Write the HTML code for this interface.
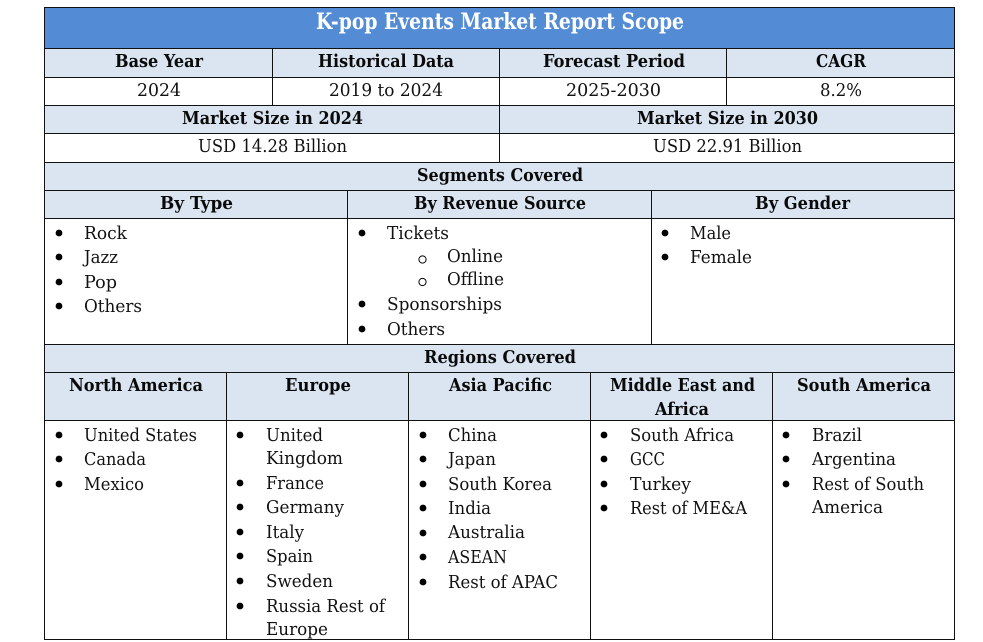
<!DOCTYPE html>
<html lang="en"><head><meta charset="utf-8"><title>K-pop Events Market Report Scope</title>
<style>
html,body{margin:0;padding:0;background:#fff;width:983px;height:642px;overflow:hidden}
svg{display:block}
text{font-family:"DejaVu Serif","Liberation Serif",serif;font-size:18px;fill:#111}
text.b{font-weight:bold;font-size:18px;fill:#0a0a0a}
text.t{font-weight:bold;font-size:22px;fill:#fff}
line{stroke:#111;stroke-width:1;shape-rendering:crispEdges}
rect{shape-rendering:crispEdges}
</style></head><body>
<svg width="983" height="642" viewBox="0 0 983 642" xmlns="http://www.w3.org/2000/svg">
<rect x="44" y="8" width="910" height="40" fill="#538cd5"/>
<rect x="44" y="48" width="910" height="29" fill="#dbe5f1"/>
<rect x="44" y="105" width="910" height="28" fill="#dbe5f1"/>
<rect x="44" y="162" width="910" height="56" fill="#dbe5f1"/>
<rect x="44" y="344" width="910" height="76" fill="#dbe5f1"/>

<g>
<line x1="44" y1="7.5" x2="955" y2="7.5"/><line x1="44" y1="48.5" x2="955" y2="48.5"/>
<line x1="44" y1="77.5" x2="955" y2="77.5"/><line x1="44" y1="105.5" x2="955" y2="105.5"/>
<line x1="44" y1="133.5" x2="955" y2="133.5"/><line x1="44" y1="162.5" x2="955" y2="162.5"/>
<line x1="44" y1="190.5" x2="955" y2="190.5"/><line x1="44" y1="218.5" x2="955" y2="218.5"/>
<line x1="44" y1="344.5" x2="955" y2="344.5"/><line x1="44" y1="372.5" x2="955" y2="372.5"/>
<line x1="44" y1="420.5" x2="955" y2="420.5"/><line x1="44" y1="639.5" x2="955" y2="639.5"/>
<line x1="44.5" y1="7" x2="44.5" y2="640"/><line x1="954.5" y1="7" x2="954.5" y2="640"/>
<line x1="272.5" y1="48" x2="272.5" y2="105"/><line x1="499.5" y1="48" x2="499.5" y2="162"/><line x1="726.5" y1="48" x2="726.5" y2="105"/>
<line x1="347.5" y1="190" x2="347.5" y2="344"/><line x1="651.5" y1="190" x2="651.5" y2="344"/>
<line x1="226.5" y1="372" x2="226.5" y2="640"/><line x1="408.5" y1="372" x2="408.5" y2="640"/><line x1="590.5" y1="372" x2="590.5" y2="640"/><line x1="772.5" y1="372" x2="772.5" y2="640"/>
</g>

<g transform="translate(0,-1)">
<text class="t" x="316" y="30" textLength="368" lengthAdjust="spacingAndGlyphs">K-pop Events Market Report Scope</text>

<text class="b" x="115" y="68" textLength="88" lengthAdjust="spacingAndGlyphs">Base Year</text>
<text class="b" x="318" y="68" textLength="136" lengthAdjust="spacingAndGlyphs">Historical Data</text>
<text class="b" x="543" y="68" textLength="142" lengthAdjust="spacingAndGlyphs">Forecast Period</text>
<text class="b" x="816" y="68" textLength="50" lengthAdjust="spacingAndGlyphs">CAGR</text>
<text class="b" x="182" y="125" textLength="181" lengthAdjust="spacingAndGlyphs">Market Size in 2024</text>
<text class="b" x="637" y="125" textLength="181" lengthAdjust="spacingAndGlyphs">Market Size in 2030</text>
<text class="b" x="417" y="182" textLength="166" lengthAdjust="spacingAndGlyphs">Segments Covered</text>
<text class="b" x="160" y="210" textLength="73" lengthAdjust="spacingAndGlyphs">By Type</text>
<text class="b" x="414" y="210" textLength="172" lengthAdjust="spacingAndGlyphs">By Revenue Source</text>
<text class="b" x="755" y="210" textLength="95" lengthAdjust="spacingAndGlyphs">By Gender</text>
<text class="b" x="424" y="364" textLength="152" lengthAdjust="spacingAndGlyphs">Regions Covered</text>
<text class="b" x="69" y="392" textLength="134" lengthAdjust="spacingAndGlyphs">North America</text>
<text class="b" x="285" y="392" textLength="66" lengthAdjust="spacingAndGlyphs">Europe</text>
<text class="b" x="449" y="392" textLength="103" lengthAdjust="spacingAndGlyphs">Asia Pacific</text>
<text class="b" x="610" y="392" textLength="145" lengthAdjust="spacingAndGlyphs">Middle East and</text>
<text class="b" x="655" y="416" textLength="54" lengthAdjust="spacingAndGlyphs">Africa</text>
<text class="b" x="797" y="392" textLength="134" lengthAdjust="spacingAndGlyphs">South America</text>

<text x="137" y="97" textLength="44" lengthAdjust="spacingAndGlyphs">2024</text>
<text x="329" y="97" textLength="114" lengthAdjust="spacingAndGlyphs">2019 to 2024</text>
<text x="566" y="97" textLength="95" lengthAdjust="spacingAndGlyphs">2025-2030</text>
<text x="820" y="97" textLength="42" lengthAdjust="spacingAndGlyphs">8.2%</text>
<text x="198" y="153" textLength="149" lengthAdjust="spacingAndGlyphs">USD 14.28 Billion</text>
<text x="653" y="153" textLength="149" lengthAdjust="spacingAndGlyphs">USD 22.91 Billion</text>

<text x="84" y="240" textLength="43" lengthAdjust="spacingAndGlyphs">Rock</text>
<text x="84" y="264" textLength="34" lengthAdjust="spacingAndGlyphs">Jazz</text>
<text x="84" y="289" textLength="33" lengthAdjust="spacingAndGlyphs">Pop</text>
<text x="84" y="313" textLength="58" lengthAdjust="spacingAndGlyphs">Others</text>
<text x="387" y="240" textLength="62" lengthAdjust="spacingAndGlyphs">Tickets</text>
<text x="447" y="263" textLength="56" lengthAdjust="spacingAndGlyphs">Online</text>
<text x="447" y="286" textLength="57" lengthAdjust="spacingAndGlyphs">Offline</text>
<text x="387" y="311" textLength="115" lengthAdjust="spacingAndGlyphs">Sponsorships</text>
<text x="387" y="336" textLength="58" lengthAdjust="spacingAndGlyphs">Others</text>
<text x="690" y="240" textLength="41" lengthAdjust="spacingAndGlyphs">Male</text>
<text x="690" y="264" textLength="62" lengthAdjust="spacingAndGlyphs">Female</text>

<text x="84" y="442" textLength="113" lengthAdjust="spacingAndGlyphs">United States</text>
<text x="84" y="466" textLength="62" lengthAdjust="spacingAndGlyphs">Canada</text>
<text x="84" y="491" textLength="60" lengthAdjust="spacingAndGlyphs">Mexico</text>

<text x="266" y="442" textLength="57" lengthAdjust="spacingAndGlyphs">United</text>
<text x="266" y="465" textLength="77" lengthAdjust="spacingAndGlyphs">Kingdom</text>
<text x="266" y="490" textLength="58" lengthAdjust="spacingAndGlyphs">France</text>
<text x="266" y="514" textLength="78" lengthAdjust="spacingAndGlyphs">Germany</text>
<text x="266" y="539" textLength="38" lengthAdjust="spacingAndGlyphs">Italy</text>
<text x="266" y="563" textLength="47" lengthAdjust="spacingAndGlyphs">Spain</text>
<text x="266" y="588" textLength="67" lengthAdjust="spacingAndGlyphs">Sweden</text>
<text x="266" y="613" textLength="119" lengthAdjust="spacingAndGlyphs">Russia Rest of</text>
<text x="266" y="636" textLength="62" lengthAdjust="spacingAndGlyphs">Europe</text>

<text x="448" y="442" textLength="49" lengthAdjust="spacingAndGlyphs">China</text>
<text x="448" y="466" textLength="48" lengthAdjust="spacingAndGlyphs">Japan</text>
<text x="448" y="491" textLength="104" lengthAdjust="spacingAndGlyphs">South Korea</text>
<text x="448" y="515" textLength="43" lengthAdjust="spacingAndGlyphs">India</text>
<text x="448" y="539" textLength="77" lengthAdjust="spacingAndGlyphs">Australia</text>
<text x="448" y="564" textLength="59" lengthAdjust="spacingAndGlyphs">ASEAN</text>
<text x="448" y="589" textLength="110" lengthAdjust="spacingAndGlyphs">Rest of APAC</text>

<text x="630" y="442" textLength="104" lengthAdjust="spacingAndGlyphs">South Africa</text>
<text x="630" y="466" textLength="35" lengthAdjust="spacingAndGlyphs">GCC</text>
<text x="630" y="491" textLength="61" lengthAdjust="spacingAndGlyphs">Turkey</text>
<text x="630" y="515" textLength="117" lengthAdjust="spacingAndGlyphs">Rest of ME&amp;A</text>

<text x="812" y="442" textLength="50" lengthAdjust="spacingAndGlyphs">Brazil</text>
<text x="812" y="466" textLength="84" lengthAdjust="spacingAndGlyphs">Argentina</text>
<text x="812" y="491" textLength="112" lengthAdjust="spacingAndGlyphs">Rest of South</text>
<text x="812" y="514" textLength="71" lengthAdjust="spacingAndGlyphs">America</text>
</g>

<g fill="#000">
<circle cx="59" cy="233" r="3.4"/><circle cx="59" cy="257" r="3.4"/><circle cx="59" cy="282" r="3.4"/><circle cx="59" cy="306" r="3.4"/>
<circle cx="362" cy="233" r="3.4"/><circle cx="362" cy="304" r="3.4"/><circle cx="362" cy="329" r="3.4"/>
<circle cx="665" cy="233" r="3.4"/><circle cx="665" cy="257" r="3.4"/>
<circle cx="59" cy="435" r="3.4"/><circle cx="59" cy="459" r="3.4"/><circle cx="59" cy="484" r="3.4"/>
<circle cx="240" cy="435" r="3.4"/><circle cx="240" cy="483" r="3.4"/><circle cx="240" cy="507" r="3.4"/><circle cx="240" cy="532" r="3.4"/><circle cx="240" cy="556" r="3.4"/><circle cx="240" cy="581" r="3.4"/><circle cx="240" cy="606" r="3.4"/>
<circle cx="423" cy="435" r="3.4"/><circle cx="423" cy="459" r="3.4"/><circle cx="423" cy="484" r="3.4"/><circle cx="423" cy="508" r="3.4"/><circle cx="423" cy="533" r="3.4"/><circle cx="423" cy="557" r="3.4"/><circle cx="423" cy="582" r="3.4"/>
<circle cx="604" cy="435" r="3.4"/><circle cx="604" cy="459" r="3.4"/><circle cx="604" cy="484" r="3.4"/><circle cx="604" cy="508" r="3.4"/>
<circle cx="786" cy="435" r="3.4"/><circle cx="786" cy="459" r="3.4"/><circle cx="786" cy="484" r="3.4"/>
</g>
<circle cx="422.5" cy="259.5" r="3.6" fill="none" stroke="#000" stroke-width="1"/>
<circle cx="422.5" cy="282" r="3.6" fill="none" stroke="#000" stroke-width="1"/>
</svg>
</body></html>
